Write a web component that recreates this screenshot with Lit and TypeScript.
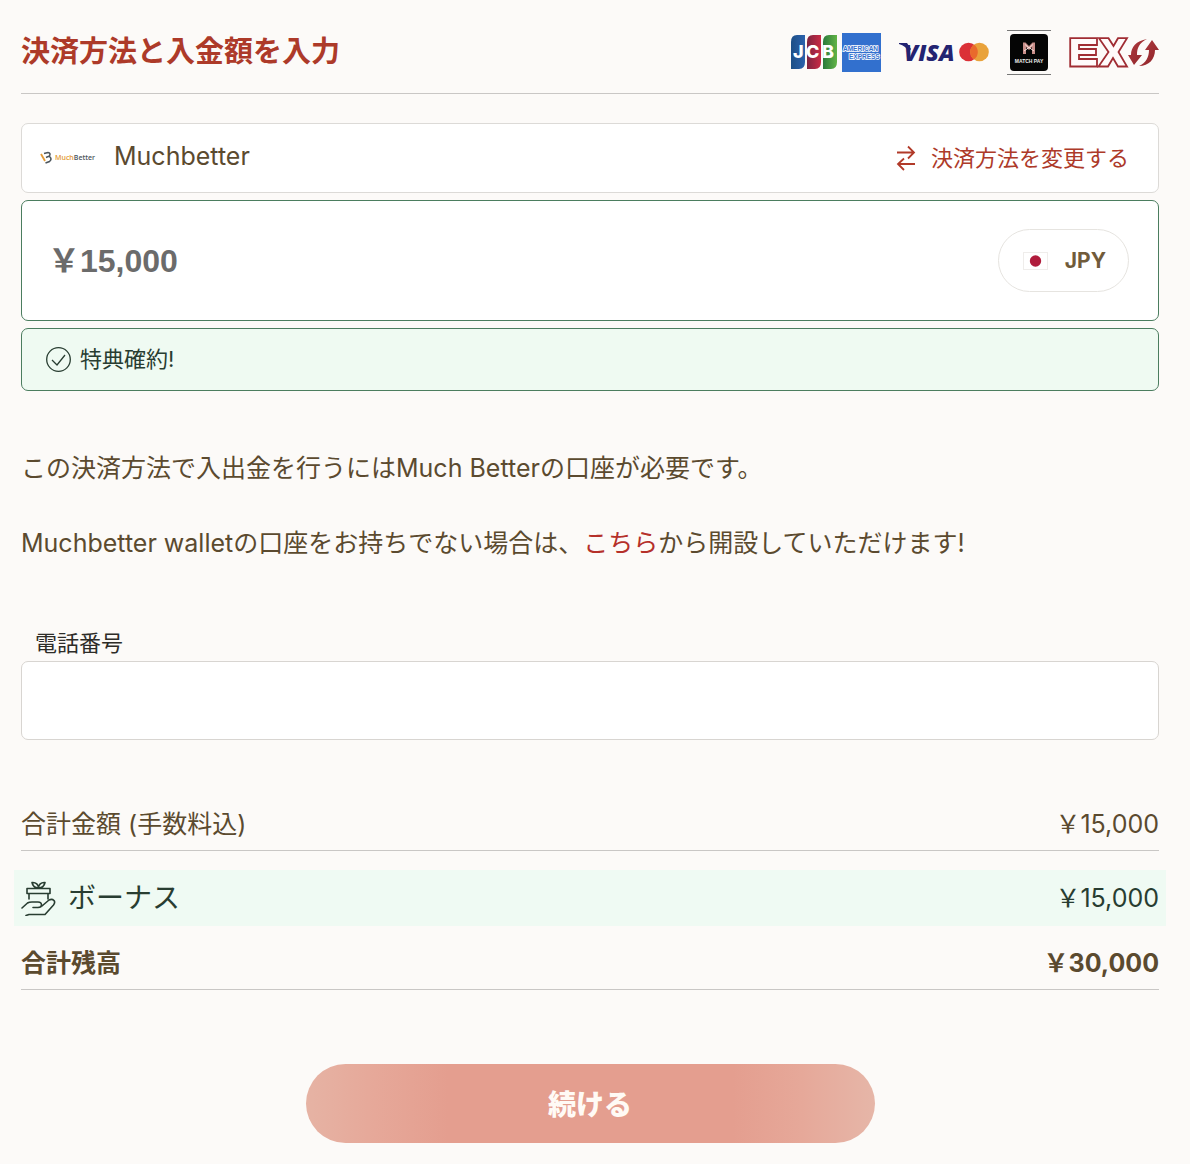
import { LitElement, html, css } from "lit";
import { customElement, property, state } from "lit/decorators.js";

@customElement("brand-logos")
export class BrandLogos extends LitElement {
  static styles = css`
    :host { display: flex; align-items: center; }
    svg { display: block; }
    .jcb { margin-right: 5px; }
    .amex { margin-right: 18px; }
    .visa { margin-right: 2px; }
    .mastercard { margin-right: 18px; }
    .match { margin-right: 18px; }
  `;

  render() {
    return html`
      <svg class="jcb" width="47" height="36" viewBox="0 0 47 36" role="img" aria-label="JCB">
        <defs>
          <linearGradient id="b"><stop stop-color="#1d4f86" /><stop offset="1" stop-color="#2b62ad" /></linearGradient>
          <linearGradient id="r"><stop stop-color="#7e2440" /><stop offset="1" stop-color="#c92a45" /></linearGradient>
          <linearGradient id="g"><stop stop-color="#2b7a3c" /><stop offset="1" stop-color="#62b446" /></linearGradient>
        </defs>
        <path d="M7 1H15V28Q15 35 9 35H1V8Q1 1 7 1Z" fill="url(#b)" />
        <path d="M23 1H31V28Q31 35 25 35H17V8Q17 1 23 1Z" fill="url(#r)" />
        <path d="M39 1H47V28Q47 35 41 35H33V8Q33 1 39 1Z" fill="url(#g)" />
        <g fill="#fff" font-family="Inter, sans-serif" font-weight="800" font-size="18">
          <text x="3" y="24">J</text><text x="16" y="24">C</text><text x="32" y="24">B</text>
        </g>
      </svg>
      <svg class="amex" width="39" height="39" viewBox="0 0 39 39" role="img" aria-label="American Express">
        <rect width="39" height="39" fill="#3270ce" />
        <g fill="#3270ce" stroke="#fff" stroke-width="1.5" paint-order="stroke" font-family="Liberation Sans, sans-serif" font-weight="700" font-size="6.500">
          <text x="1" y="18">AMERICAN</text><text x="7" y="26">EXPRESS</text>
        </g>
      </svg>
      <svg class="visa" width="58" height="36" viewBox="0 -6 58 36" role="img" aria-label="Visa">
        <path d="M0 3H8L12 9L10 12Q7 6 0 4Z" fill="#232371" />
        <text x="5" y="21" fill="#232371" font-family="Open Sans, sans-serif" font-weight="800" font-style="italic" font-size="23">VISA</text>
      </svg>
      <svg class="mastercard" width="30" height="20" viewBox="0 0 30 20" role="img" aria-label="Mastercard">
        <circle cx="9.5" cy="10" r="9.3" fill="#db3037" />
        <circle cx="20.5" cy="10" r="9.3" fill="#e9a23b" />
        <path d="M15 2.5A9.3 9.3 0 0 1 15 17.5A9.3 9.3 0 0 1 15 2.5Z" fill="#e96a2c" />
      </svg>
      <svg class="match" width="44" height="46" viewBox="0 0 44 46" role="img" aria-label="Match Pay">
        <path d="M0 1.500H44M0 45.5H44" stroke="#777" />
        <rect x="3" y="5" width="38" height="37" rx="4" fill="#050505" />
        <path d="M16 13.5H18.5L22 17L25.5 13.5H28V25H25V18L22 21L19 18V25H16Z" fill="#c98f8a" />
        <path d="M18 15.5L22 19L26 15.5M17 22L22 18.5L27 22" fill="none" stroke="#f6dfdc" />
        <text x="22" y="34" text-anchor="middle" fill="#eee" font-family="Liberation Sans, sans-serif" font-weight="700" font-size="5">MATCH PAY</text>
      </svg>
      <svg width="90" height="36" viewBox="0 0 90 36" role="img" aria-label="EX">
        <defs><linearGradient id="e" x2="1" y2="1"><stop stop-color="#b13b40" /><stop offset="1" stop-color="#8d2328" /></linearGradient></defs>
        <path d="M1.2 4.2H28V11H10V15H27V21H10V25H28V32.500H1.2Z" fill="#fffafa" stroke="#a02c33" stroke-width="1.800" />
        <path d="M30 4.2H39.500L44.500 12L49 4.200H58L49.500 18L58 32.500H49L44 24L39 32.500H29.500L39.500 18Z" fill="#fffafa" stroke="#a02c33" stroke-width="1.800" />
        <path d="M78 5C67 7 62 13 62 21H59L65 31L73 21H68C68 14 70 9 78 5Z" fill="url(#e)" />
        <path d="M70 32C77 29 80 23 80 16H76L83 6L90 16H86C86 25 80 32 70 32Z" fill="url(#e)" />
      </svg>
    `;
  }
}

@customElement("summary-row")
export class SummaryRow extends LitElement {
  @property() label = "";
  @property() amount = "";

  static styles = css`
    :host { display: flex; align-items: center; justify-content: space-between; line-height: 36px; }
    .label { display: flex; align-items: center; gap: 12px; }
    :host(.bonus) .label { font-size: 28px; }
  `;

  render() {
    return html`
      <span class="label"><slot></slot><span>${this.label}</span></span>
      <span>${this.amount}</span>
    `;
  }
}

const YEN = "\uFFE5";

@customElement("app-root")
export class AppRoot extends LitElement {
  @state() private amount = YEN + "15,000";

  static styles = css`
    :host {
      display: block;
      background: #fcfaf8;
      color: #5b4a2f;
      font-family: Inter, "Noto Sans CJK JP", sans-serif;
      font-size: 25px;
      line-height: 38px;
    }
    * { box-sizing: border-box; }
    svg { display: block; flex: none; }
    .page { display: flex; flex-direction: column; padding: 0 31px 21px 21px; }
    .header {
      display: flex; align-items: center; justify-content: space-between;
      padding: 29px 0 18px; border-bottom: 1px solid #c9c7c5;
    }
    h1 { margin: 0; font-size: 29px; line-height: 44px; font-weight: 700; color: #ad3a29; }
    .cards { display: flex; flex-direction: column; gap: 7px; margin-top: 29px; }
    .card { display: flex; align-items: center; border: 1px solid #dcdad7; border-radius: 7px; background: #fff; }
    .method { padding: 15px 29px 15px 18px; gap: 18px; }
    .name { flex: 1; padding-bottom: 4px; line-height: 34px; }
    .change {
      display: flex; align-items: center; gap: 15px; text-decoration: none;
      color: #ad3a29; font-size: 22px;
    }
    .amount { padding: 28px 29px 28px 26px; border-color: #4b7d5f; justify-content: space-between; }
    .amount input {
      flex: 1; min-width: 0; border: 0; padding: 0; outline: 0; background: none; color: #6b6b6b;
      font: 700 32px/48px "Liberation Sans", "Noto Sans CJK JP", sans-serif;
    }
    .currency {
      display: flex; align-items: center; gap: 17px; padding: 12px 22px 12px 24px;
      border: 1px solid #e6e4e0; border-radius: 32px; background: #fff; color: #715b3a;
      font: 700 21px/37px Inter, sans-serif;
    }
    .promo { gap: 9px; padding: 12px 24px; font-size: 22px; line-height: 37px; background: #effaf2; border-color: #4b7d5f; color: #283d31; }
    .info { display: flex; flex-direction: column; gap: 37px; margin-top: 58px; }
    p { margin: 0; }
    .info a { color: #b5302a; text-decoration: none; }
    .field { display: flex; flex-direction: column; gap: 3px; margin-top: 66px; }
    .field label { padding-left: 14px; font-size: 22px; line-height: 30px; color: #2d2c28; }
    .field input {
      width: 100%; height: 79px; padding: 0 20px; border: 1px solid #d8d5d1; border-radius: 7px;
      background: #fff; font: inherit; color: inherit;
    }
    .summary { display: flex; flex-direction: column; margin-top: 66px; }
    .line { padding-bottom: 8px; border-bottom: 1px solid #c9c7c5; }
    .bonus { margin: 19px -7px; padding: 10px 7px; background: #effaf3; color: #283d31; }
    .total { font-weight: 700; }
    .submit {
      align-self: center; width: 50%; margin-top: 74px; padding: 20px 16px 16px; border: 0; border-radius: 40px;
      background: linear-gradient(90deg, #e6b3a4 0%, #e6a899 12%, #e49e8f 25%, #e49e8f 75%, #e6a899 87%, #e6b6a8 100%);
      color: #fffaf5; font: 900 28px/43px Inter, "Noto Sans CJK JP", sans-serif;
    }
  `;

  render() {
    return html`
      <main class="page" lang="ja">
        <header class="header">
          <h1>決済方法と入金額を入力</h1>
          <brand-logos></brand-logos>
        </header>

        <section class="cards">
          <div class="card method">
            <svg width="56" height="16" viewBox="0 0 56 16" role="img" aria-label="MuchBetter">
              <path d="M1 4L5 11" fill="none" stroke="#e39a36" stroke-width="1.800" />
              <path d="M4 3.500L8 2.500Q11 3 9.500 6L6 7.500M9.500 6.500Q12.500 9 9.500 11.500L5.500 13" fill="none" stroke="#4d565c" stroke-width="1.600" />
              <text x="15" y="10" font-family="Open Sans, sans-serif" font-weight="600" font-size="7" fill="#e39a36">Much<tspan fill="#4d565c">Better</tspan></text>
            </svg>
            <span class="name">Muchbetter</span>
            <a class="change" href="#methods">
              <svg width="20" height="26" viewBox="0 0 20 26" fill="none" stroke="#b13a29" stroke-width="1.800">
                <path d="M1 7.500H18M12 1.500L18 7.500L12 13.500M19 19H2M8 13.500L2 19L8 25" />
              </svg>
              決済方法を変更する
            </a>
          </div>

          <div class="card amount">
            <input aria-label="入金額" .value=${this.amount}
              @input=${(e: Event) => (this.amount = (e.target as HTMLInputElement).value)} />
            <button class="currency" type="button">
              <svg width="25" height="18" viewBox="0 0 25 18">
                <rect x=".5" y=".5" width="24" height="17" fill="#fff" stroke="#efedeb" />
                <circle cx="12.500" cy="9" r="5.700" fill="#b01c3c" />
              </svg>
              JPY
            </button>
          </div>

          <div class="card promo">
            <svg width="25" height="25" viewBox="0 0 25 25" fill="none" stroke="#283d31" stroke-width="1.300">
              <circle cx="12.500" cy="12.500" r="11.800" /><path d="M6 13L11 18L19 8" />
            </svg>
            特典確約!
          </div>
        </section>

        <section class="info">
          <p>この決済方法で入出金を行うにはMuch Betterの口座が必要です。</p>
          <p>Muchbetter walletの口座をお持ちでない場合は、<a href="#open">こちら</a>から開設していただけます!</p>
        </section>

        <div class="field">
          <label for="phone">電話番号</label>
          <input id="phone" type="tel" />
        </div>

        <section class="summary">
          <summary-row class="line" label="合計金額 (手数料込)" amount=${YEN + "15,000"}></summary-row>
          <summary-row class="bonus" label="ボーナス" amount=${YEN + "15,000"}>
            <svg width="35" height="36" viewBox="0 0 35 36" fill="none" stroke="#283d31" stroke-width="1.600" stroke-linejoin="round" stroke-linecap="round">
              <path d="M6 8.500H29V13.500H6ZM8 13.500V19M27 13.500V19M17.500 8C13.500 8 11.500 5 11 2.500C15 2 17.500 5 17.500 8C17.500 5 20 2 24 2.500C23.500 5 21.500 8 17.500 8" />
              <path d="M1 28L6.500 23Q8 22 11 22H17Q20.500 22 20.500 25Q20.500 27.500 17 27.500H12M21 26L28 20Q31 18.500 33 20.500Q34.500 22.500 32.500 25L24 34.500H8L5 35.500" />
            </svg>
          </summary-row>
          <summary-row class="line total" label="合計残高" amount=${YEN + "30,000"}></summary-row>
        </section>

        <button class="submit" type="button">続ける</button>
      </main>
    `;
  }
}
